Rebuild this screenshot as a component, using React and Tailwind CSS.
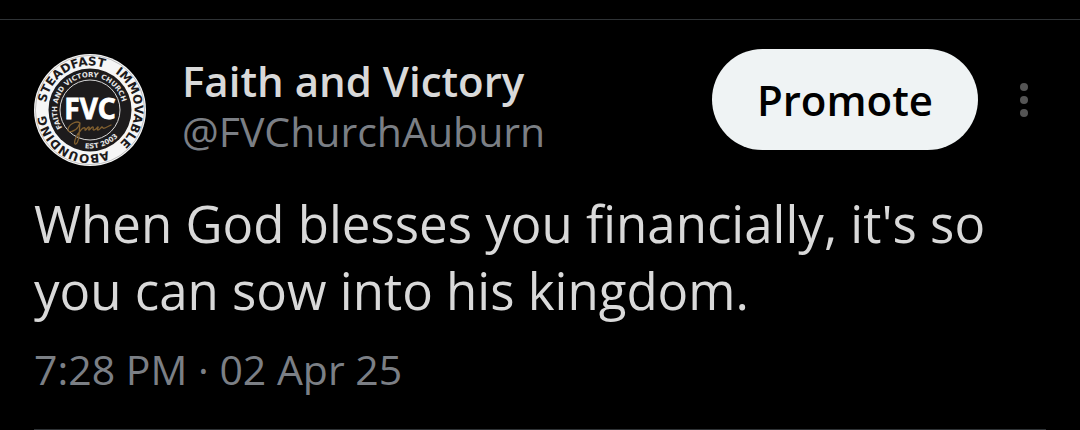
import React from 'react';

const post = {
  name: 'Faith and Victory',
  handle: '@FVChurchAuburn',
  text: "When God blesses you financially, it's so you can sow into his kingdom.",
  time: '7:28 PM',
  date: '02 Apr 25',
};

function Avatar() {
  return (
    <svg viewBox="0 0 112 112" className="size-28 shrink-0" role="img" aria-label="Faith and Victory Church">
      <defs>
        <path id="ring-outer" d="M56 100.5 A44.5 44.5 0 0 1 56 11.5 A44.5 44.5 0 0 1 56 100.5 A44.5 44.5 0 0 1 56 11.5" />
        <path id="ring-inner" d="M56 89 A33 33 0 0 1 56 23 A33 33 0 0 1 56 89" />
        <path id="ring-est" d="M17.5 56 A38.5 38.5 0 0 0 94.5 56" />
      </defs>
      <circle cx="56" cy="56" r="56" fill="#f6f6f6" />
      <circle cx="56" cy="56" r="54.6" fill="none" stroke="#8a8a8a" strokeWidth="0.5" />
      <circle cx="56" cy="56" r="41.5" fill="#1d1b1c" />
      <circle cx="56" cy="56" r="30" fill="none" stroke="#d8d8d8" strokeWidth="1" />
      <g fontFamily="DejaVu Sans, sans-serif" fontWeight="700">
        <g fontSize="12" fill="#1d1b1c">
          <text><textPath href="#ring-outer" startOffset="77">STEADFAST</textPath></text>
          <text><textPath href="#ring-outer" startOffset="166">IMMOVABLE</textPath></text>
          <text><textPath href="#ring-outer" startOffset="261">ABOUNDING</textPath></text>
        </g>
        <g fontSize="7" fill="#e4e4e4">
          <text><textPath href="#ring-inner" startOffset="33">FAITH AND VICTORY CHURCH</textPath></text>
          <text><textPath href="#ring-est" startOffset="55">EST 2003</textPath></text>
        </g>
      </g>
      <text x="56" y="65" textAnchor="middle" fontFamily="Noto Sans, sans-serif" fontWeight="700" fontSize="28" fill="#fff" stroke="#fff" strokeWidth="0.8">
        FVC
      </text>
      <path
        d="M46 69c-4-3-12 2-12 7 0 3 7 2 10-3l2-4c-1 7 0 19-4 21-3 1-1-8 5-14 2-3 5-3 4 0 1 1 3-4 4-3s-1 3 0 3 3-4 4-3-1 3 1 3 3-3 4-3-2 3 0 3 3-3 4-3 0 2 3 1l6-3"
        fill="none"
        stroke="#82602f"
        strokeWidth="1.3"
        strokeLinecap="round"
      />
    </svg>
  );
}

export default function App() {
  return (
    <main className="min-h-screen bg-black pt-[19px] font-['Open_Sans',sans-serif] text-[#d9d9d9]">
      <article className="border-t border-[#2f3336] px-[34px] pt-[29px]">
        <header className="flex items-start">
          <div className="flex flex-1 items-start gap-9 pt-[5px]">
            <Avatar />
            <div className="pt-0.5 leading-[50px]">
              <h1 className="text-[42px] font-semibold">{post.name}</h1>
              <a href="#profile" className="block text-[41px] text-[#7b7f85]">{post.handle}</a>
            </div>
          </div>
          <button type="button" className="h-[101px] rounded-full bg-[#eff3f4] px-[45px] text-[42px] font-semibold text-black">
            Promote
          </button>
          <button type="button" aria-label="More" className="ml-6 flex h-[101px] w-11 items-center justify-center">
            <svg viewBox="0 0 8 34" className="h-[34px] w-2" fill="#555">
              <circle cx="4" cy="4" r="4" />
              <circle cx="4" cy="17" r="4" />
              <circle cx="4" cy="30" r="4" />
            </svg>
          </button>
        </header>
        <p className="mt-6 text-[51px] leading-[67px]">{post.text}</p>
        <footer className="border-b border-[#2f3336] pt-5 pb-[35px] text-[41px] leading-[50px] text-[#7b7f85]">
          <time dateTime="2025-04-02T19:28">{post.time} · {post.date}</time>
        </footer>
      </article>
    </main>
  );
}
